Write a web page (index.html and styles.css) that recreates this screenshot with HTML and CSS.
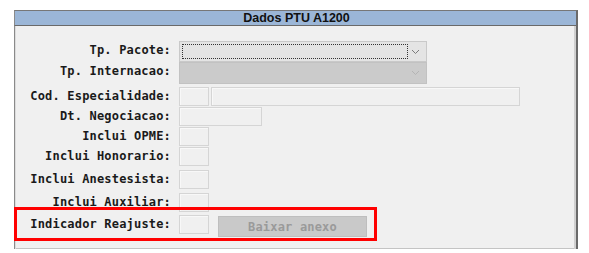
FILE: index.html
```html
<!DOCTYPE html>
<html>
<head>
<meta charset="utf-8">
<link rel="stylesheet" href="styles.css">
</head>
<body>
<div class="frame">
  <div class="title">Dados PTU A1200</div>
  <div class="panel">
    <div class="form">
      <label class="lbl">Tp. Pacote:</label>
      <div class="fld"><div class="select sel-active"><span class="focus"></span><svg class="chev" width="9" height="6" viewBox="0 0 9 6"><path d="M1 1 L4.5 4.5 L8 1" fill="none" stroke="#7a7a7a" stroke-width="1"/></svg></div></div>

      <label class="lbl">Tp. Internacao:</label>
      <div class="fld"><div class="select sel-disabled"><svg class="chev" width="9" height="6" viewBox="0 0 9 6"><path d="M1 1 L4.5 4.5 L8 1" fill="none" stroke="#b4b4b4" stroke-width="1"/></svg></div></div>

      <label class="lbl">Cod. Especialidade:</label>
      <div class="fld"><div class="box sm"></div><div class="box wide"></div></div>

      <label class="lbl">Dt. Negociacao:</label>
      <div class="fld"><div class="box date"></div></div>

      <label class="lbl">Inclui OPME:</label>
      <div class="fld"><div class="box sm"></div></div>

      <label class="lbl">Inclui Honorario:</label>
      <div class="fld"><div class="box sm"></div></div>

      <label class="lbl">Inclui Anestesista:</label>
      <div class="fld"><div class="box sm"></div></div>

      <label class="lbl">Inclui Auxiliar:</label>
      <div class="fld"><div class="box sm"></div></div>

      <label class="lbl">Indicador Reajuste:</label>
      <div class="fld"><div class="box sm"></div><button class="btn" disabled>Baixar anexo</button></div>
    </div>
    <div class="highlight"></div>
  </div>
</div>
</body>
</html>
```
FILE: styles.css
```css
html, body {
  margin: 0;
  padding: 0;
  background: #ffffff;
}
.frame {
  margin: 10px 0 0 14px;
  width: 564px;
}
.title {
  height: 14px;
  background: #9bb6d7;
  border-top: 1px solid #777777;
  border-bottom: 1px solid #6a6a6a;
  border-left: 1px solid #8a8a8a;
  border-right: 2px solid #6a6a6a;
  font-family: "Liberation Sans", Arial, sans-serif;
  font-weight: bold;
  font-size: 12.5px;
  line-height: 14px;
  text-align: center;
  color: #111111;
  padding-left: 2px;
}
.panel {
  position: relative;
  height: 223px;
  background: #f0f0f0;
  border-left: 1px solid #8a8a8a;
  border-right: 2px solid #6a6a6a;
  box-shadow: inset 1px 0 0 #dcdcdc, inset -2px 0 0 #d0d0d0, inset 0 -1px 0 #c4c4c4;
  box-sizing: border-box;
  padding-top: 15px;
}
.form {
  display: grid;
  grid-template-columns: 156px 1fr;
  grid-template-rows: 21px 25px 20px 20px 20px 23px 23px 22px 24px;
  column-gap: 8px;
}
.lbl {
  font-family: "DejaVu Sans Mono", "Liberation Mono", monospace;
  font-weight: bold;
  font-size: 12px;
  letter-spacing: 0.18px;
  color: #1a1a1a;
  text-align: right;
  height: 20px;
  line-height: 19px;
  white-space: nowrap;
}
.fld {
  display: flex;
  align-items: flex-start;
  gap: 2px;
}
.select {
  position: relative;
  width: 248px;
  height: 21px;
  box-sizing: border-box;
}
.sel-active {
  background: #e4e4e4;
  border: 1px solid #c9c9c9;
}
.sel-disabled {
  background: #cbcbcb;
  border: 1px solid #c2c2c2;
  height: 22px;
}
.focus {
  position: absolute;
  left: 2px;
  top: 2px;
  width: 226px;
  height: 15px;
  border: 1px dotted #333333;
  box-sizing: border-box;
}
.chev {
  position: absolute;
  right: 6px;
  top: 7px;
}
.box {
  height: 19px;
  box-sizing: border-box;
  background: #f0f0f0;
  border: 1px solid #d5d5d5;
  box-shadow: inset 1px 1px 0 #f8f8f8;
}
.sm { width: 30px; }
.wide { width: 309px; }
.date { width: 83px; }
.btn {
  margin-left: 7px;
  margin-top: 1px;
  width: 149px;
  height: 21px;
  background: #c9c9c9;
  border: 1px solid #bebebe;
  color: #9a9a9a;
  font-family: "DejaVu Sans Mono", "Liberation Mono", monospace;
  font-weight: bold;
  font-size: 12px;
  letter-spacing: 0.18px;
  padding: 0;
}
.highlight {
  position: absolute;
  left: -1px;
  top: 181px;
  width: 363px;
  height: 34px;
  border: 3px solid #ff0000;
  box-sizing: border-box;
}
```
